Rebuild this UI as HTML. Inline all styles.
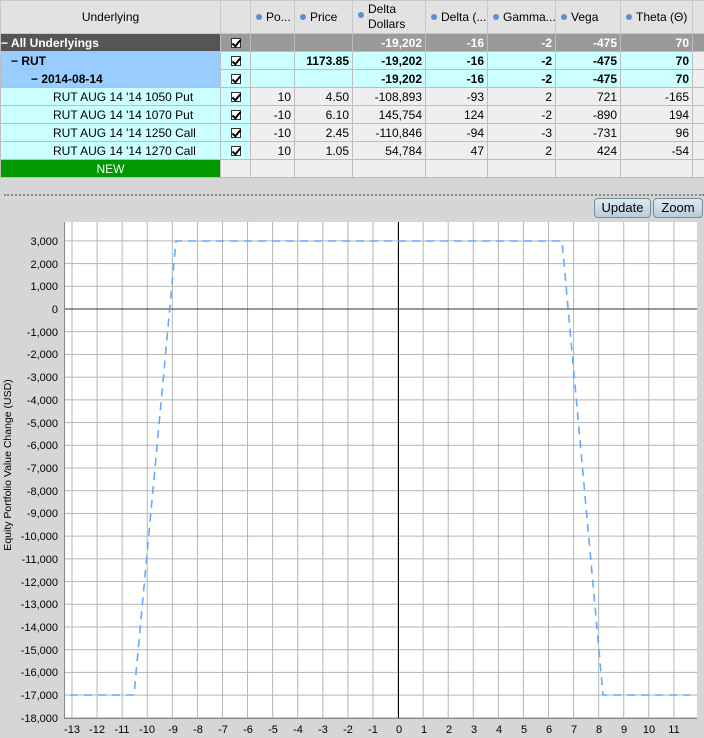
<!DOCTYPE html>
<html><head><meta charset="utf-8"><style>
*{margin:0;padding:0;box-sizing:border-box}
body{width:704px;height:738px;overflow:hidden;background:#d6d6d6;font-family:"Liberation Sans",Arial,sans-serif;font-size:12px;color:#000;position:relative}
table{border-collapse:collapse;position:absolute;left:0;top:0;table-layout:fixed;width:704px}
td{border:1px solid #bdbdbd;height:18px;padding:0 3px;white-space:nowrap;overflow:hidden;text-align:right;background:#efefef}
tr.h td{height:33px;background:#e2e2e2;text-align:left;font-size:12px;border-color:#c8c8c8}
.b{font-weight:bold}
tr.all td{background:#9a9a9a;color:#fff;font-weight:bold}
tr.all td.u{background:#555 ;text-align:left;padding-left:0}
tr.cy td{background:#ccffff}
tr.cy td.u{background:#99ccff;text-align:left}
tr.leg td.u{background:#ccffff;text-align:left;padding-left:52px}
td.ck{text-align:center;background:inherit}
.dot{display:inline-block;width:6px;height:6px;border-radius:50%;background:#5b8fd6;margin:0 4px 1px 2px;vertical-align:middle}
.cb{display:inline-block;width:10px;height:10px;border:1px solid #333;background:#fff;position:relative;vertical-align:middle}
.cb:after{content:"";position:absolute;left:2px;top:-1px;width:3px;height:7px;border:solid #000;border-width:0 2px 2px 0;transform:rotate(40deg)}
.btn{position:absolute;top:198px;height:20px;border:1px solid #7b8c99;border-radius:4px;background:linear-gradient(#dfeaf2,#b9ccd8);font-size:13px;text-align:center;line-height:18px}
</style></head><body>
<table>
<colgroup><col style="width:220px"><col style="width:30px"><col style="width:44px"><col style="width:58px"><col style="width:73px"><col style="width:62px"><col style="width:68px"><col style="width:65px"><col style="width:72px"><col style="width:12px"></colgroup>
<tr class="h"><td style="text-align:center">Underlying</td><td></td><td><span class="dot"></span>Po...</td><td><span class="dot"></span>Price</td><td style="line-height:15px"><span class="dot" style="float:left;margin-top:10px"></span>Delta<br>Dollars</td><td><span class="dot"></span>Delta (...</td><td><span class="dot"></span>Gamma...</td><td><span class="dot"></span>Vega</td><td><span class="dot"></span>Theta (Θ)</td><td></td></tr>
<tr class="all"><td class="u">&minus; All Underlyings</td><td class="ck" style="background:#9a9a9a"><span class="cb"></span></td><td></td><td></td><td>-19,202</td><td>-16</td><td>-2</td><td>-475</td><td>70</td><td></td></tr>
<tr class="cy b"><td class="u" style="padding-left:10px">&minus; RUT</td><td class="ck"><span class="cb"></span></td><td></td><td>1173.85</td><td>-19,202</td><td>-16</td><td>-2</td><td>-475</td><td>70</td><td style="background:#efefef"></td></tr>
<tr class="cy b"><td class="u" style="padding-left:30px">&minus; 2014-08-14</td><td class="ck"><span class="cb"></span></td><td></td><td></td><td>-19,202</td><td>-16</td><td>-2</td><td>-475</td><td>70</td><td style="background:#efefef"></td></tr>
<tr class="leg"><td class="u">RUT AUG 14 '14 1050 Put</td><td class="ck" style="background:#ccffff"><span class="cb"></span></td><td>10</td><td>4.50</td><td>-108,893</td><td>-93</td><td>2</td><td>721</td><td>-165</td><td></td></tr>
<tr class="leg"><td class="u">RUT AUG 14 '14 1070 Put</td><td class="ck" style="background:#ccffff"><span class="cb"></span></td><td>-10</td><td>6.10</td><td>145,754</td><td>124</td><td>-2</td><td>-890</td><td>194</td><td></td></tr>
<tr class="leg"><td class="u">RUT AUG 14 '14 1250 Call</td><td class="ck" style="background:#ccffff"><span class="cb"></span></td><td>-10</td><td>2.45</td><td>-110,846</td><td>-94</td><td>-3</td><td>-731</td><td>96</td><td></td></tr>
<tr class="leg"><td class="u">RUT AUG 14 '14 1270 Call</td><td class="ck" style="background:#ccffff"><span class="cb"></span></td><td>10</td><td>1.05</td><td>54,784</td><td>47</td><td>2</td><td>424</td><td>-54</td><td></td></tr>
<tr><td style="background:#009900;color:#fff;text-align:center">NEW</td><td></td><td></td><td></td><td></td><td></td><td></td><td></td><td></td><td></td></tr>
</table>
<div style="position:absolute;left:4px;top:194px;width:700px;border-top:2px dotted #888"></div>
<div class="btn" style="left:594px;width:57px">Update</div>
<div class="btn" style="left:653px;width:50px">Zoom</div>
<svg width="704" height="738" style="position:absolute;left:0;top:0" font-family="Liberation Sans, Arial, sans-serif" font-size="11">
<defs><pattern id="g" patternUnits="userSpaceOnUse" x="71.5" y="240.4" width="25.08" height="22.71"><path d="M0 0.5H25.08M0.5 0V22.71" stroke="#b4b4b4" stroke-width="1" fill="none"/></pattern></defs>
<rect x="65" y="222" width="632" height="497" fill="#fff"/>
<rect x="65" y="222" width="632" height="497" fill="url(#g)"/>
<line x1="65" y1="309" x2="697" y2="309" stroke="#333"/>
<line x1="398.5" y1="222" x2="398.5" y2="719" stroke="#000"/>
<line x1="64.5" y1="222" x2="64.5" y2="719" stroke="#888"/>
<line x1="65" y1="718.5" x2="697" y2="718.5" stroke="#888"/>
<polyline points="70,695 134,695 176,241 562,241 603,695 690,695" fill="none" stroke="#66aaff" stroke-width="1.6" stroke-dasharray="8,6"/>
<g text-anchor="end">
<text x="58" y="245">3,000</text><text x="58" y="268">2,000</text><text x="58" y="290">1,000</text><text x="58" y="313">0</text><text x="58" y="336">-1,000</text><text x="58" y="358">-2,000</text><text x="58" y="381">-3,000</text><text x="58" y="404">-4,000</text><text x="58" y="427">-5,000</text><text x="58" y="449">-6,000</text><text x="58" y="472">-7,000</text><text x="58" y="495">-8,000</text><text x="58" y="517">-9,000</text><text x="58" y="540">-10,000</text><text x="58" y="563">-11,000</text><text x="58" y="586">-12,000</text><text x="58" y="608">-13,000</text><text x="58" y="631">-14,000</text><text x="58" y="654">-15,000</text><text x="58" y="676">-16,000</text><text x="58" y="699">-17,000</text><text x="58" y="722">-18,000</text>
</g>
<g text-anchor="middle">
<text x="72" y="733">-13</text><text x="97" y="733">-12</text><text x="122" y="733">-11</text><text x="147" y="733">-10</text><text x="173" y="733">-9</text><text x="198" y="733">-8</text><text x="223" y="733">-7</text><text x="248" y="733">-6</text><text x="273" y="733">-5</text><text x="298" y="733">-4</text><text x="323" y="733">-3</text><text x="348" y="733">-2</text><text x="373" y="733">-1</text><text x="399" y="733">0</text><text x="424" y="733">1</text><text x="449" y="733">2</text><text x="474" y="733">3</text><text x="499" y="733">4</text><text x="524" y="733">5</text><text x="549" y="733">6</text><text x="574" y="733">7</text><text x="599" y="733">8</text><text x="624" y="733">9</text><text x="649" y="733">10</text><text x="674" y="733">11</text>
</g>
<text x="0" y="0" font-size="10.5" text-anchor="middle" transform="translate(11,465) rotate(-90)">Equity Portfolio Value Change (USD)</text>
</svg>
</body></html>
